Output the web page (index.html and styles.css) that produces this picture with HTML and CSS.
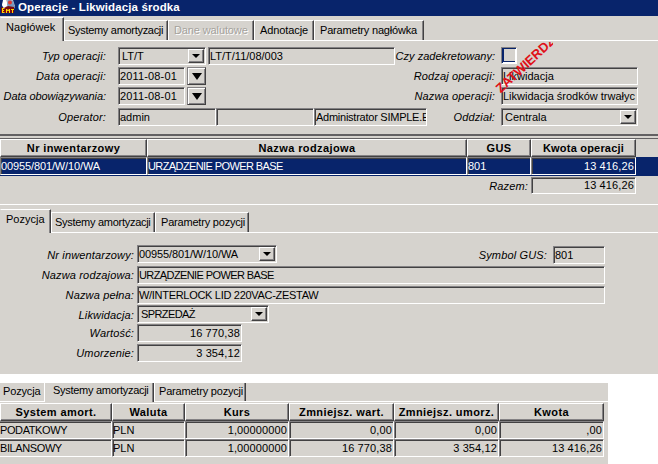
FILE: index.html
```html
<!DOCTYPE html>
<html lang="pl">
<head>
<meta charset="utf-8">
<title>Operacje - Likwidacja środka</title>
<link rel="stylesheet" href="styles.css">
</head>
<body>
<main class="window">
  <header class="titlebar">
    <svg class="app-icon" width="16" height="14" viewBox="0 0 16 14">
      <path d="M4 0h9l2 6-3 4H4L2 5z" fill="#b9b9c4"/>
      <path d="M3 0h3l2 5-4 3-2-3z" fill="#fff"/>
      <path d="M8 0l5 1 2 7-4 2-4-5z" fill="#7898bf"/>
      <circle cx="10" cy="2.5" r="2" fill="#e4362d"/>
      <path d="M1 7l3 1 4-2 6 1v6H1z" fill="#7c0b10"/>
      <path d="M2.500 8.500v4M2 8.500h2.500M2 10.500h2M2 12.500h2.500M6.500 13V9l1.500 2 1.500-2v4M11 9.500h3M12.500 9v4" fill="none" stroke="#ffd800"/>
    </svg>
    <span class="caption">Operacje - Likwidacja środka</span>
  </header>

  <nav class="tabs tabs-header">
    <span class="tab active t-nag">Nagłówek</span><span class="tab t-sys">Systemy amortyzacji</span><span class="tab t-dane disabled">Dane walutowe</span><span class="tab t-adn">Adnotacje</span><span class="tab t-par">Parametry nagłówka</span>
  </nav>

  <section class="header-form">
    <div class="row">
      <label class="l-main">Typ operacji:</label>
      <div class="field combo w88"><span>LT/T</span><i class="arrow"></i></div>
      <div class="field w187">LT/T/11/08/003</div>
      <label class="l-right czy">Czy zadekretowany:</label>
      <div class="checkbox"></div>
    </div>
    <div class="row">
      <label class="l-main">Data operacji:</label>
      <div class="field w67 date">2011-08-01</div><i class="arrow big"></i>
      <label class="l-right">Rodzaj operacji:</label>
      <div class="field w137">Likwidacja</div>
    </div>
    <div class="row third">
      <label class="l-main obow">Data obowiązywania:</label>
      <div class="field w67 date">2011-08-01</div><i class="arrow big"></i>
      <label class="l-right">Nazwa operacji:</label>
      <div class="field w137">Likwidacja środków trwałyc</div>
    </div>
    <div class="row">
      <label class="l-main">Operator:</label>
      <div class="field w98">admin</div>
      <div class="field w98"></div>
      <div class="field w113">Administrator SIMPLE.E</div>
      <label class="l-right">Oddział:</label>
      <div class="field combo w137"><span>Centrala</span><i class="arrow"></i></div>
    </div>
    <div class="stamp-clip"><span class="stamp">ZATWIERDZ</span></div>
  </section>

  <section class="items">
    <div class="items-grid heads">
      <div class="head">Nr inwentarzowy</div><div class="head">Nazwa rodzajowa</div><div class="head">GUS</div><div class="head kwota">Kwota operacji</div>
    </div>
    <div class="items-grid selected">
      <div class="cell code">00955/801/W/10/WA</div><div class="cell caps">URZĄDZENIE POWER BASE</div><div class="cell">801</div><div class="cell num">13 416,26</div>
    </div>
    <div class="total"><label>Razem:</label><div class="field num">13 416,26</div></div>
  </section>

  <section class="position">
    <nav class="tabs tabs-position">
      <span class="tab active p-poz">Pozycja</span><span class="tab p-sys">Systemy amortyzacji</span><span class="tab p-par">Parametry pozycji</span>
    </nav>
    <div class="position-form">
      <div class="prow r1">
        <label>Nr inwentarzowy:</label>
        <div class="field combo w140"><span class="flush code">00955/801/W/10/WA</span><i class="arrow"></i></div>
        <label class="gus-label">Symbol GUS:</label>
        <div class="field gus">801</div>
      </div>
      <div class="prow r2"><label>Nazwa rodzajowa:</label><div class="field w468 caps">URZĄDZENIE POWER BASE</div></div>
      <div class="prow r3"><label>Nazwa pełna:</label><div class="field w468 inter">W/INTERLOCK LID 220VAC-ZESTAW</div></div>
      <div class="prow r4"><label>Likwidacja:</label><div class="field combo w132"><span class="caps">SPRZEDAŻ</span><i class="arrow"></i></div></div>
      <div class="prow r5"><label>Wartość:</label><div class="field w105 num">16 770,38</div></div>
      <div class="prow r6"><label>Umorzenie:</label><div class="field w105 num">3 354,12</div></div>
    </div>
  </section>
</main>

<section class="systems">
  <nav class="tabs tabs-systems">
    <span class="tab s-poz">Pozycja</span><span class="tab active s-sys">Systemy amortyzacji</span><span class="tab s-par">Parametry pozycji</span>
  </nav>
  <div class="systems-grid heads">
    <div class="head">System amort.</div><div class="head">Waluta</div><div class="head">Kurs</div><div class="head">Zmniejsz. wart.</div><div class="head">Zmniejsz. umorz.</div><div class="head">Kwota</div>
  </div>
  <div class="systems-grid">
    <div class="cell name">PODATKOWY</div><div class="cell">PLN</div><div class="cell num">1,00000000</div><div class="cell num">0,00</div><div class="cell num">0,00</div><div class="cell num">,00</div>
  </div>
  <div class="systems-grid">
    <div class="cell name">BILANSOWY</div><div class="cell">PLN</div><div class="cell num">1,00000000</div><div class="cell num">16 770,38</div><div class="cell num">3 354,12</div><div class="cell num">13 416,26</div>
  </div>
</section>
</body>
</html>
```
FILE: styles.css
```css
* { box-sizing: border-box; }
body {
  margin: 0;
  width: 658px;
  height: 464px;
  overflow: hidden;
  background: #fff;
  color: #000;
  font: 11px/14px "Liberation Sans", Arial, sans-serif;
  white-space: nowrap;
}
.window { height: 374px; background: #d6d3ce; overflow: hidden; }

.titlebar { display: flex; height: 16px; background: #08246b; overflow: hidden; }
.app-icon { flex: none; }
.caption { margin-left: 2px; color: #fff; font: bold 11.5px/14px "Liberation Sans", Arial, sans-serif; letter-spacing: .12px; }

/* tab strips */
.tabs { display: flex; align-items: flex-end; border-bottom: 1px solid #fff; }
.tab {
  flex: none;
  height: 20px;
  padding: 2px 0 0 4px;
  border: 1px solid #fff;
  border-right: 1px solid #424142;
  border-bottom: 0;
  box-shadow: inset -1px 0 #848284;
}
.tab.active { position: relative; border-left-color: #d6d3ce; margin-bottom: -1px; background: #d6d3ce; }
.disabled { color: #a5a29c; text-shadow: 1px 1px #fff; }
.tabs-header { height: 25px; }
.t-nag { width: 64px; height: 24px; padding-left: 5px; letter-spacing: .15px; }
.t-sys { width: 104px; padding-left: 3px; letter-spacing: -.3px; }
.t-dane { width: 86px; padding-left: 5px; letter-spacing: -.12px; }
.t-adn { width: 60px; padding-left: 5px; letter-spacing: -.1px; }
.t-par { width: 110px; padding-left: 5px; letter-spacing: -.18px; }

/* sunken boxes */
.field, .cell {
  flex: none;
  height: 18px;
  padding: 1px 1px 0 0;
  border: 1px solid #fff;
  border-top-color: #848284;
  border-left-color: #848284;
  box-shadow: inset 1px 1px #424142;
  overflow: hidden;
}
.field { padding-left: 1px; }
.num { text-align: right; letter-spacing: .12px; }
.caps { letter-spacing: -.6px; }
.code { letter-spacing: -.12px; }
.inter { letter-spacing: -.3px; }
.combo { display: flex; justify-content: space-between; padding: 1px 1px 1px 3px; }
.combo .flush { margin-left: -2px; }
.arrow {
  display: grid;
  place-items: center;
  flex: none;
  width: 16px;
  height: 14px;
  background: #d6d3ce;
  border: 1px solid #fff;
  border-right-color: #424142;
  border-bottom-color: #424142;
  box-shadow: inset -1px -1px #848284;
}
.arrow::after { content: ""; border: 4px solid transparent; border-top-color: #000; border-bottom: 0; }
.arrow.big { width: 19px; height: 18px; margin-left: 2px; border-color: #848284 #424142 #424142 #848284; box-shadow: inset 1px 1px #fff, inset -1px -1px #848284; }
.arrow.big::after { border-width: 7px 5.5px 0; }
label { flex: none; font-style: italic; text-align: right; letter-spacing: .15px; }

/* operation header */
.header-form { position: relative; height: 93px; padding-top: 6px; }
.row { display: flex; height: 20px; }
.row.third { height: 21px; }
.row label { padding-top: 2px; }
.l-main { width: 106px; margin-right: 12px; }
.row .obow { letter-spacing: -.08px; }
.l-right { flex: 1; margin-right: 6px; }
.row .czy { letter-spacing: .02px; }
.row::after { content: ""; width: 20px; flex: none; }
.row:first-child::after { width: 141px; }
.w88 { width: 88px; margin-right: 2px; }
.w187 { width: 187px; }
.w67 { width: 67px; }
.w137 { width: 137px; }
.w98 { width: 98px; }
.w113 { width: 113px; letter-spacing: -.25px; }
.date { letter-spacing: .15px; }
.checkbox { flex: none; width: 16px; height: 17px; border: 1px solid; border-color: #848284 #fff #fff #848284; box-shadow: inset 1px 1px #08246b, inset -1px -1px #fff, inset 2px -2px #08246b; }
.stamp-clip { position: absolute; left: 488px; top: 1px; width: 65px; height: 60px; overflow: hidden; pointer-events: none; }
.stamp { position: absolute; left: 14px; top: 40px; color: #e01018; font: bold 13px/13px "Liberation Sans", Arial, sans-serif; transform: rotate(-43deg); transform-origin: 0 100%; }

/* item list */
.items { height: 71px; border-bottom: 1px solid #fff; border-top: 2px solid #636163; }
.heads { border-top: 1px solid #636163; }
.items .heads { margin-top: 2px; }
.items-grid { display: grid; grid-template-columns: 147px 320px 64px 105px; }
.head {
  height: 18px;
  padding-top: 1px;
  border: 1px solid #fff;
  border-right-color: #424142;
  border-bottom-color: #424142;
  box-shadow: inset -1px -1px #848284;
  font-weight: bold;
  text-align: center;
  letter-spacing: .4px;
}
.head.kwota { letter-spacing: .2px; }
.selected { background: #08246b; color: #fff; border-bottom: 1px solid #08246b; }
.total { display: flex; justify-content: flex-end; margin: 1px 22px 0 0; }
.total label { padding-top: 2px; margin-right: 3px; }
.total .field { width: 105px; height: 17px; padding-top: 0; }

/* position details */
.tabs-position { height: 28px; }
.p-poz { width: 51px; height: 24px; padding-left: 5px; }
.p-sys { width: 104px; padding-left: 3px; letter-spacing: -.28px; }
.p-par { width: 94px; padding-left: 5px; letter-spacing: -.2px; }
.position-form { padding-top: 12px; }
.prow { display: flex; height: 20px; }
.prow > label { width: 134px; padding-top: 2px; margin-right: 3px; }
.prow .gus-label { width: 270px; margin-right: 6px; }
.w140 { width: 140px; }
.gus { width: 52px; margin-top: 1px; }
.w468 { width: 468px; }
.w132 { width: 132px; }
.w105 { width: 105px; }
.r1 { height: 21px; }
.r1 > label { padding-top: 3px; }
.r3, .r4 { height: 19px; }
.r4 > label { padding-top: 3px; }

/* depreciation systems */
.systems { width: 608px; height: 81px; margin-top: 9px; background: #d6d3ce; overflow: hidden; }
.tabs-systems { height: 19px; }
.tabs-systems .tab { height: 18px; padding-top: 1px; border-top: 0; }
.tabs-systems .tab.active { height: 19px; padding-top: 0; }
.tabs-systems .s-poz { width: 45px; padding-left: 2px; letter-spacing: -.15px; border-left-color: #d6d3ce; border-right-color: #fff; box-shadow: none; }
.s-sys { width: 109px; padding-left: 7px; letter-spacing: -.28px; }
.s-par { width: 92px; letter-spacing: -.2px; }
.systems-grid { display: grid; grid-template-columns: 112px 73px 104px 105px 105px 105px; }
.systems .heads { border: 0; margin-top: 1px; }
.systems .name { border-left: 0; box-shadow: inset 0 1px #424142; letter-spacing: -.4px; }
```
